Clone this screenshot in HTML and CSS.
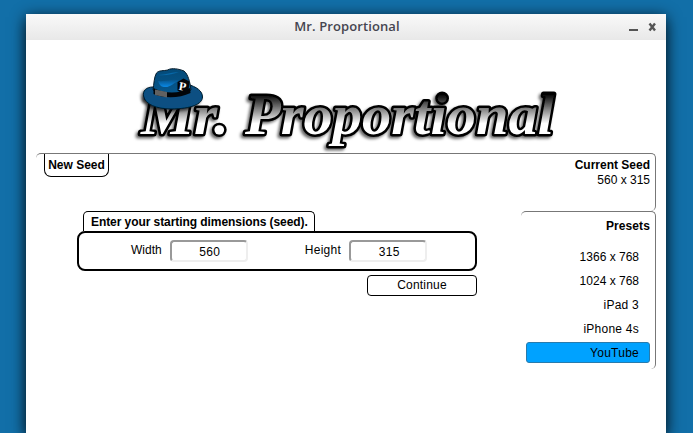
FILE: index.html
```html
<!DOCTYPE html>
<html lang="en">
<head>
<meta charset="utf-8">
<title>Mr. Proportional</title>
<link rel="stylesheet" href="styles.css">
</head>
<body>
<div class="window">
  <header class="titlebar">
    <span class="title">Mr. Proportional</span>
    <svg class="controls" width="40" height="26" viewBox="0 0 40 26">
      <path d="M3 15h9v2H3z" fill="#555"/>
      <path d="M23.500 9.500l5.500 7M29 9.500l-5.500 7" stroke="#555" stroke-width="2.400"/>
    </svg>
  </header>
  <main class="content">
    <svg class="logo" width="440" height="100" viewBox="130 60 440 100" role="img" aria-label="Mr. Proportional">
      <defs>
        <linearGradient id="ink" gradientUnits="userSpaceOnUse" x1="0" y1="92" x2="0" y2="134">
          <stop offset="0.05" stop-color="#000"/><stop offset="0.75" stop-color="#fff"/>
        </linearGradient>
        <linearGradient id="felt" x1="0" y1="0" x2="0" y2="1">
          <stop offset="0" stop-color="#044a78"/><stop offset="1" stop-color="#07588f"/>
        </linearGradient>
        <linearGradient id="shine" x1="0" y1="0" x2="0" y2="1">
          <stop offset="0" stop-color="#07548a"/><stop offset="1" stop-color="#0a8ae8"/>
        </linearGradient>
        <filter id="shadow" x="-10%" y="-20%" width="120%" height="150%">
          <feDropShadow dx="-2" dy="2" stdDeviation="1.5" flood-color="#000" flood-opacity="0.6"/>
        </filter>
      </defs>
      <g class="wordmark" filter="url(#shadow)" fill="url(#ink)">
        <text x="141" y="133.500" textLength="88" lengthAdjust="spacingAndGlyphs">Mr.</text>
        <text x="245" y="133.500" textLength="309" lengthAdjust="spacingAndGlyphs">Proportional</text>
      </g>
      <g filter="url(#shadow)" stroke="#061c2c" stroke-width="1">
        <path d="M153 87C146 87 142.500 91 143.500 96C145 104.500 157 109 171 109C191 109 202.500 104 202.500 97C202.500 91 197 87 187 84Z" fill="#075082"/>
      </g>
      <path d="M153 90C154 84 154 77 156.500 73C159 70 164 71 167.500 70C172 67.500 179 69 184 71C188 74 190 82 191 90C182 97 166 98 153 90Z" fill="url(#felt)" stroke="#061c2c" stroke-width="1"/>
      <path d="M158 81c8 1 15-3 22 0c-6 1-10 7-16 6c-3 0-5-3-6-6z" fill="url(#shine)"/>
      <path d="M158 75c8 0 13-3 21-3c-6 2-13 4-21 3z" fill="#0868a8"/>
      <path d="M153.500 88C165 94 179 94 190 88L190.500 93C180 98 165 99 153.500 94Z" fill="#020508"/>
      <path d="M155 89.500l12 2.500v5.500l-12-2.500z" fill="#616161"/>
      <path d="M177.500 82l6-3.500l6 3l-1 9l-6 3l-5-3z" fill="#020508"/>
      <text class="monogram" x="179" y="90.500" transform="rotate(10 183 86)">P</text>
    </svg>
    <section class="seed-bar">
      <h2 class="step">New Seed</h2>
      <div class="current"><h2>Current Seed</h2><p>560 x 315</p></div>
    </section>
    <div class="columns">
      <form class="seed-form">
        <h2 class="form-tab">Enter your starting dimensions (seed).</h2>
        <div class="fields">
          <label class="field"><span>Width</span><input type="text" value="560"></label>
          <label class="field height"><span>Height</span><input type="text" value="315"></label>
        </div>
        <button class="continue" type="button">Continue</button>
      </form>
      <aside class="presets">
        <h2>Presets</h2>
        <ul>
          <li>1366 x 768</li>
          <li>1024 x 768</li>
          <li class="named">iPad 3</li>
          <li class="named">iPhone 4s</li>
          <li class="named selected">YouTube</li>
        </ul>
      </aside>
    </div>
  </main>
</div>
</body>
</html>
```
FILE: styles.css
```css
* { box-sizing: border-box; }
body {
  margin: 0;
  height: 433px;
  overflow: hidden;
  padding: 14px 27px 0 26px;
  background: #126fa8;
  font: 12px/15px "Liberation Sans", Arial, sans-serif;
  color: #000;
}
h2, p, ul { margin: 0; padding: 0; }
h2 { font-size: 12px; line-height: 15px; }
.window {
  width: 640px;
  height: 419px;
  background: #fff;
  box-shadow: 0 3px 14px rgba(0, 0, 0, .85), 0 14px 12px rgba(0, 0, 0, .2);
}
.titlebar {
  display: grid;
  grid-template-columns: 40px 1fr 40px;
  height: 26px;
  background: linear-gradient(#f9f9f9, #e8e8e8);
}
.title {
  grid-column: 2;
  text-align: center;
  font: 600 13px/25px "Open Sans", sans-serif;
  letter-spacing: .1px;
  color: #454550;
  padding-left: 2px;
}
.content { padding: 20px 10px 0; }
.logo { display: block; margin: 0 0 -7px 94px; }
.wordmark {
  font: italic bold 58px "Liberation Serif", serif;
  stroke: #000;
  stroke-width: 5px;
  stroke-linejoin: round;
  paint-order: stroke;
}
.monogram {
  font: bold 12px "Liberation Serif", serif;
  fill: #fff;
}
.seed-bar {
  display: flex;
  justify-content: space-between;
  align-items: flex-start;
  height: 58px;
  padding: 0 5px 0 8px;
  border-top: 1px solid #777;
  border-right: 1px solid #777;
  border-radius: 5px;
}
.step {
  height: 23px;
  width: 65px;
  padding-top: 4px;
  text-align: center;
  border: 1px solid #000;
  border-top: 0;
  border-radius: 0 0 7px 7px;
}
.current { padding-top: 4px; text-align: right; }
.columns { display: flex; justify-content: space-between; }
.seed-form {
  display: flex;
  flex-direction: column;
  width: 400px;
  margin-left: 41px;
}
.form-tab {
  width: 232px;
  height: 20px;
  margin-left: 6px;
  padding: 3px 0 0 7px;
  letter-spacing: -.07px;
  white-space: nowrap;
  border: 1px solid #000;
  border-bottom: 0;
  border-radius: 5px 5px 0 0;
}
.fields {
  display: flex;
  height: 40px;
  padding: 7px 0 0 52px;
  gap: 57px;
  border: 2px solid #000;
  border-radius: 8px;
}
.field { display: flex; align-items: flex-start; gap: 8px; }
.field span { padding-top: 3px; }
.height span { letter-spacing: .3px; }
input {
  width: 78px;
  height: 22px;
  padding: 2px 0 0 2px;
  border: 2px solid;
  border-color: #999 #eee #eee #999;
  border-radius: 4px;
  font: inherit;
  letter-spacing: .3px;
  text-align: center;
}
.continue {
  align-self: flex-end;
  width: 110px;
  height: 21px;
  margin-top: 4px;
  padding: 0;
  border: 1px solid #000;
  border-radius: 4px;
  background: #fff;
  font: inherit;
  letter-spacing: .2px;
  color: #000;
}
.presets {
  width: 135px;
  height: 158px;
  padding: 7px 5px 0;
  text-align: right;
  border-top: 1px solid #777;
  border-right: 1px solid #777;
  border-radius: 5px;
}
.presets h2 { letter-spacing: .1px; }
.presets ul { list-style: none; padding-top: 12px; }
.presets li {
  height: 21px;
  margin-bottom: 3px;
  padding: 3px 10px 1px 0;
  border: 1px solid transparent;
  border-radius: 3px;
}
.presets .named { letter-spacing: .25px; }
.presets .selected { background: #00a2ff; border-color: #287bad; }
```
